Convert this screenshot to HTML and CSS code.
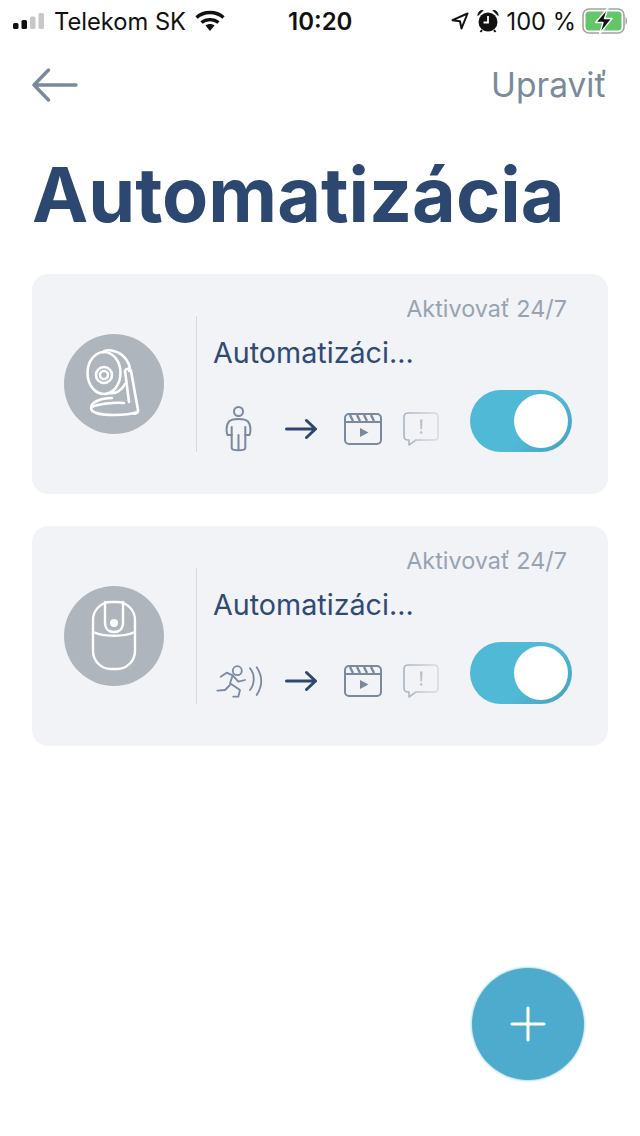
FILE: index.html
```html
<!DOCTYPE html>
<html lang="en">
<head>
    <meta charset="UTF-8">
    <meta name="viewport" content="width=device-width, initial-scale=1.0">
    <title>Automatizácia</title>
    <link rel="stylesheet" href="styles.css">
</head>
<body>
    <div class="page">
        <div class="status-bar">
            <div class="status-left">
                <svg class="signal" width="32" height="16" viewBox="0 0 32 16">
                    <rect x="0" y="10" width="5.5" height="6" rx="1.5" fill="#111"/>
                    <rect x="8.5" y="7" width="5.5" height="9" rx="1.5" fill="#111"/>
                    <rect x="17" y="3.5" width="5.5" height="12.5" rx="1.5" fill="#c8c8c8"/>
                    <rect x="25.5" y="0" width="5.5" height="16" rx="1.5" fill="#c8c8c8"/>
                </svg>
                <span class="carrier">Telekom SK</span>
                <svg class="wifi" width="30" height="22" viewBox="0 0 30 22">
                    <path d="M1.5 7.5C9 .8 21 .8 28.5 7.5" fill="none" stroke="#111" stroke-width="3.4"/>
                    <path d="M6.5 12.5C11 8.6 19 8.6 23.5 12.5" fill="none" stroke="#111" stroke-width="3.4"/>
                    <path d="M10.5 15.6C13 13.6 17 13.6 19.5 15.6L15 21Z" fill="#111"/>
                </svg>
            </div>
            <span class="clock">10:20</span>
            <div class="status-right">
                <svg width="18" height="18" viewBox="0 0 18 18">
                    <path d="M16.5 1.5L1.5 8.2L9 9.2L10.5 16.5Z" fill="none" stroke="#111" stroke-width="2" stroke-linejoin="round"/>
                </svg>
                <svg class="alarm" width="22" height="24" viewBox="0 0 22 24">
                    <circle cx="11" cy="13" r="9.5" fill="#111"/>
                    <path d="M1 6.5C1 3 3.5 1 6 1.5ZM21 6.5C21 3 18.5 1 16 1.5Z" fill="#111" stroke="#111"/>
                    <path d="M11 7V13.5H6.5" fill="none" stroke="#fff" stroke-width="1.8"/>
                    <path d="M5 21L3.5 23M17 21L18.5 23" stroke="#111" stroke-width="2"/>
                </svg>
                <span class="percent">100 %</span>
                <svg class="battery" width="46" height="26" viewBox="0 0 46 26">
                    <rect x="1" y="1" width="41" height="24" rx="6" fill="none" stroke="#a3a3a3" stroke-width="1.6"/>
                    <rect x="3.5" y="3.5" width="36" height="19" rx="3.5" fill="#63c769"/>
                    <path d="M43.5 9C45.5 9.5 45.5 16.5 43.5 17Z" fill="#a3a3a3"/>
                    <path d="M26 0L13.5 14.5H21L17.5 26L30 10.5H22.5Z" fill="#111" stroke="#fff" stroke-width="1.4" stroke-linejoin="round"/>
                </svg>
            </div>
        </div>

        <div class="nav">
            <svg width="46" height="34" viewBox="0 0 46 34">
                <path d="M44 17H2M16.5 2L2 17L16.5 32" fill="none" stroke="#7b899c" stroke-width="3.4" stroke-linecap="round" stroke-linejoin="round"/>
            </svg>
            <span class="nav-edit">Upraviť</span>
        </div>

        <h1 class="title">Automatizácia</h1>

        <div class="card">
            <div class="device">
                <svg width="100" height="100" viewBox="0 0 100 100">
                    <g fill="none" stroke="#fff" stroke-width="2.6" stroke-linecap="round" stroke-linejoin="round">
                        <ellipse cx="40" cy="39" rx="16.5" ry="21"/>
                        <circle cx="40" cy="41" r="8"/>
                        <circle cx="40" cy="41" r="4"/>
                        <path d="M39 18C42 15 52 16 58 21C64 26 67 33 65 37"/>
                        <path d="M46 59C52 60 58 56 61 50"/>
                        <path d="M61 37C62 34 66 34 67 37L74 76C74 79 72 80 70 79.500"/>
                        <path d="M61 37L65 68"/>
                        <path d="M48 64C37 64 27 68 27 74C27 78 35 81 50 81C60 81 68 80 74 78"/>
                        <path d="M28 73C34 70 50 68 60 69"/>
                    </g>
                </svg>
            </div>
            <div class="divider"></div>
            <div class="card-body">
                <div class="card-label">Aktivovať 24/7</div>
                <div class="card-name">Automatizáci...</div>
                <div class="card-row">
                    <div class="card-icons">
                        <svg class="trigger" width="50" height="50" viewBox="0 0 50 50">
                            <g fill="none" stroke="#7b899c" stroke-width="2" stroke-linecap="round" stroke-linejoin="round">
                                <circle cx="25.500" cy="7.500" r="4.500"/>
                                <path d="M18.700 44V23M32.300 44V23M25.500 31V46M18.700 44C18.700 47 32.300 47 32.300 44"/>
                                <path d="M18.700 31H14.500C13 28 13 21 16 17.500C19 14 32 14 35 17.500C38 21 38 28 36.500 31H32.300"/>
                            </g>
                        </svg>
                        <svg class="arrow" width="32" height="22" viewBox="0 0 32 22">
                            <path d="M1.500 11H30.500M21.500 2.500L30.500 11L21.500 19.500" fill="none" stroke="#2c4870" stroke-width="3" stroke-linecap="round" stroke-linejoin="round"/>
                        </svg>
                        <svg class="video" width="38" height="32" viewBox="0 0 38 32">
                            <rect x="1" y="1" width="36" height="30" rx="4" fill="none" stroke="#7b899c" stroke-width="2"/>
                            <path d="M1 9H37" stroke="#7b899c" stroke-width="2"/>
                            <path d="M6 2L9 8M13 2L16 8M20 2L23 8M27 2L30 8" stroke="#7b899c" stroke-width="2.400"/>
                            <path d="M16 15L24.500 19.500L16 24Z" fill="#7b899c"/>
                        </svg>
                        <svg class="alert" width="36" height="34" viewBox="0 0 36 34">
                            <defs>
                                <linearGradient id="alertFade" x1="0" y1="0" x2="1" y2="0">
                                    <stop offset="0" stop-color="#a9b3c0"/>
                                    <stop offset="1" stop-color="#d7dbe3"/>
                                </linearGradient>
                            </defs>
                            <path d="M5 1H31C33.500 1 35 2.500 35 5V24C35 26.500 33.500 28 31 28H13L6 33V28H5C2.500 28 1 26.500 1 24V5C1 2.500 2.500 1 5 1Z" fill="none" stroke="url(#alertFade)" stroke-width="1.600" stroke-linejoin="round"/>
                            <path d="M17 7.500H19.500L19 17.500H17.500Z" fill="#b7bfca"/>
                            <circle cx="18.200" cy="20.500" r="1.300" fill="#b7bfca"/>
                        </svg>
                    </div>
                    <div class="toggle"><span class="knob"></span></div>
                </div>
            </div>
        </div>

        <div class="card">
            <div class="device">
                <svg width="100" height="100" viewBox="0 0 100 100">
                    <g fill="none" stroke="#fff" stroke-width="2.400" stroke-linecap="round" stroke-linejoin="round">
                        <rect x="29" y="16" width="42" height="67" rx="18"/>
                        <path d="M29 46C40 51 60 51 71 46"/>
                        <path d="M41 16V37C41 43 45 46 50 46C55 46 59 43 59 37V16"/>
                    </g>
                    <circle cx="50" cy="37" r="4" fill="#fff"/>
                </svg>
            </div>
            <div class="divider"></div>
            <div class="card-body">
                <div class="card-label">Aktivovať 24/7</div>
                <div class="card-name">Automatizáci...</div>
                <div class="card-row">
                    <div class="card-icons">
                        <svg class="trigger" width="50" height="50" viewBox="0 0 50 50">
                            <g fill="none" stroke="#7b899c" stroke-width="1.800" stroke-linecap="round" stroke-linejoin="round">
                                <circle cx="24.300" cy="14.700" r="4.500"/>
                                <path d="M7.700 20.700L13.700 16.700L19.700 19.300L17 27.300L27 34L25.300 40.700H20.300"/>
                                <path d="M4.300 34.700L12 34L17 29"/>
                                <path d="M19.700 19.300L25.300 25.700L32 24"/>
                                <path d="M37 12.300C42 18 42 28 37 34"/>
                                <path d="M43.700 11.300C49.500 20 49.500 30 43.700 39"/>
                            </g>
                        </svg>
                        <svg class="arrow" width="32" height="22" viewBox="0 0 32 22">
                            <path d="M1.500 11H30.500M21.500 2.500L30.500 11L21.500 19.500" fill="none" stroke="#2c4870" stroke-width="3" stroke-linecap="round" stroke-linejoin="round"/>
                        </svg>
                        <svg class="video" width="38" height="32" viewBox="0 0 38 32">
                            <rect x="1" y="1" width="36" height="30" rx="4" fill="none" stroke="#7b899c" stroke-width="2"/>
                            <path d="M1 9H37" stroke="#7b899c" stroke-width="2"/>
                            <path d="M6 2L9 8M13 2L16 8M20 2L23 8M27 2L30 8" stroke="#7b899c" stroke-width="2.400"/>
                            <path d="M16 15L24.500 19.500L16 24Z" fill="#7b899c"/>
                        </svg>
                        <svg class="alert" width="36" height="34" viewBox="0 0 36 34">
                            <path d="M5 1H31C33.500 1 35 2.500 35 5V24C35 26.500 33.500 28 31 28H13L6 33V28H5C2.500 28 1 26.500 1 24V5C1 2.500 2.500 1 5 1Z" fill="none" stroke="url(#alertFade)" stroke-width="1.600" stroke-linejoin="round"/>
                            <path d="M17 7.500H19.500L19 17.500H17.500Z" fill="#b7bfca"/>
                            <circle cx="18.200" cy="20.500" r="1.300" fill="#b7bfca"/>
                        </svg>
                    </div>
                    <div class="toggle"><span class="knob"></span></div>
                </div>
            </div>
        </div>

        <button class="fab">
            <svg width="36" height="36" viewBox="0 0 36 36">
                <path d="M18 2V34M2 18H34" stroke="#fff" stroke-width="3" stroke-linecap="round"/>
            </svg>
        </button>
    </div>
</body>
</html>
```

FILE: styles.css
```css
* { box-sizing: border-box; margin: 0; padding: 0; }
body { font-family: Inter, "Noto Sans", sans-serif; background-color: #ffffff; color: #2f4a73; }
svg { display: block; flex-shrink: 0; }

.page { position: relative; height: 1136px; width: 640px; overflow: hidden; }

.status-bar {
    display: flex; align-items: center; height: 44px; padding: 0 12px 2px 13px;
    color: #111111; font-size: 23.7px; white-space: nowrap;
}
.status-left, .status-right { display: flex; align-items: center; }
.status-left { width: 275px; }
.status-right { margin-left: auto; }
.carrier { margin-left: 9px; }
.wifi { margin-left: 9px; }
.clock { font-weight: 600; font-size: 24px; }
.alarm { margin-left: 8px; }
.percent { margin-left: 8px; }
.battery { margin-left: 6px; }

.nav {
    display: flex; align-items: center; justify-content: space-between;
    padding: 1px 33px 0 32px; height: 80px;
}
.nav-edit { font-size: 33.5px; color: #7b899c; }

.title { font-size: 75.4px; font-weight: 700; line-height: 92px; color: #2c4870; padding: 25px 0 0 32px; height: 150px; }

.card {
    display: flex; align-items: flex-start; width: 576px; height: 220px; margin: 0 32px 32px;
    background-color: #f1f3f7; border-radius: 16px;
}
.device {
    width: 100px; height: 100px; margin: 60px 0 0 32px; border-radius: 50%; background-color: #aeb5bd;
}
.divider { width: 1px; height: 136px; margin: 42px 0 0 32px; background-color: #d5d9e3; }
.card-body { flex: 1; padding: 20px 36px 0 16px; }
.card-label { font-size: 23.4px; line-height: 30px; color: #98a3b2; text-align: right; padding-right: 5px; }
.card-name { font-size: 28.7px; line-height: 36px; margin-top: 11px; color: #2f4a73; }
.card-row { display: flex; height: 62px; margin-top: 19px; }
.card-icons { display: flex; align-items: center; padding-top: 16px; }
.arrow { margin-left: 22px; }
.video { margin-left: 27px; }
.alert { margin-left: 21px; }

.toggle {
    display: flex; align-items: center; justify-content: flex-end; width: 102px; height: 62px; margin-left: 31px;
    padding-right: 4px; border-radius: 31px;
    background-image: linear-gradient(135deg, #50b9d6 60%, #449fbe 100%);
}
.knob { width: 54px; height: 54px; border-radius: 50%; background-color: #ffffff; }

.fab {
    position: absolute; left: 472px; top: 968px; width: 112px; height: 112px;
    display: flex; align-items: center; justify-content: center;
    border: none; border-radius: 50%; background-color: #4eabcd; box-shadow: 0 0 2px 1px #b5e0ee;
}
```
